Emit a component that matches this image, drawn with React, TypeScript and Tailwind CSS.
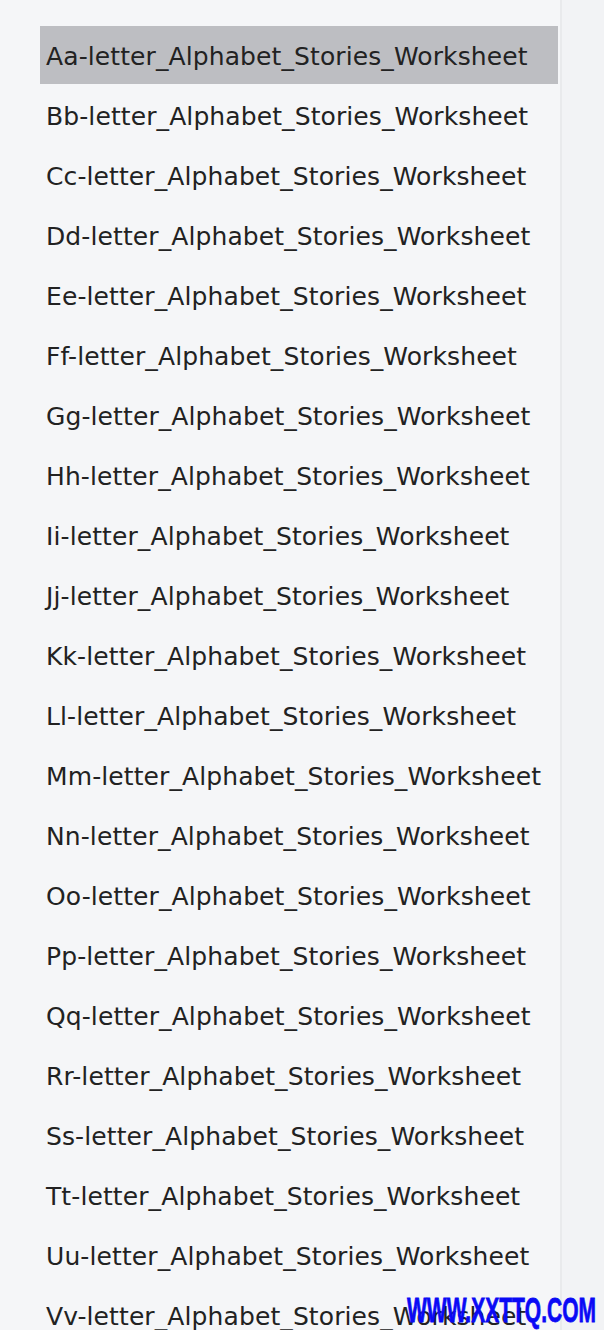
import React from "react";

const letters = ["Aa","Bb","Cc","Dd","Ee","Ff","Gg","Hh","Ii","Jj","Kk","Ll","Mm","Nn","Oo","Pp","Qq","Rr","Ss","Tt","Uu","Vv","Ww"];

export default function App() {
  return (
    <div className="relative flex h-[1330px] w-[604px] overflow-hidden bg-[#f2f3f5]">
      <div className="w-[560px] shrink-0 bg-[#f5f6f8] pt-[26px]">
        {letters.map((l, i) => (
          <div
            key={l}
            className={`ml-[40px] mr-[2px] mb-[2px] flex h-[58px] items-center pl-[6px] pt-[4px] whitespace-nowrap text-[25px] tracking-[0.1px] text-[#222222] ${i === 0 ? "bg-[#bdbec2]" : ""}`}
            style={{ fontFamily: '"DejaVu Sans", sans-serif' }}
          >
            {l}-letter_Alphabet_Stories_Worksheet
          </div>
        ))}
      </div>
      <div className="w-[2px] shrink-0 bg-[#e9eaec]" />
      <div className="flex-1 bg-[#f2f3f5]" />
      <div
        className="absolute left-[407px] top-[1292px] origin-left scale-x-[0.6] whitespace-nowrap text-[35px] font-bold leading-none text-[#0a0af5] [-webkit-text-stroke:0.8px_#0a0af5]"
        style={{ fontFamily: '"Liberation Sans", sans-serif' }}
      >
        WWW.XXTTQ.COM
      </div>
    </div>
  );
}
